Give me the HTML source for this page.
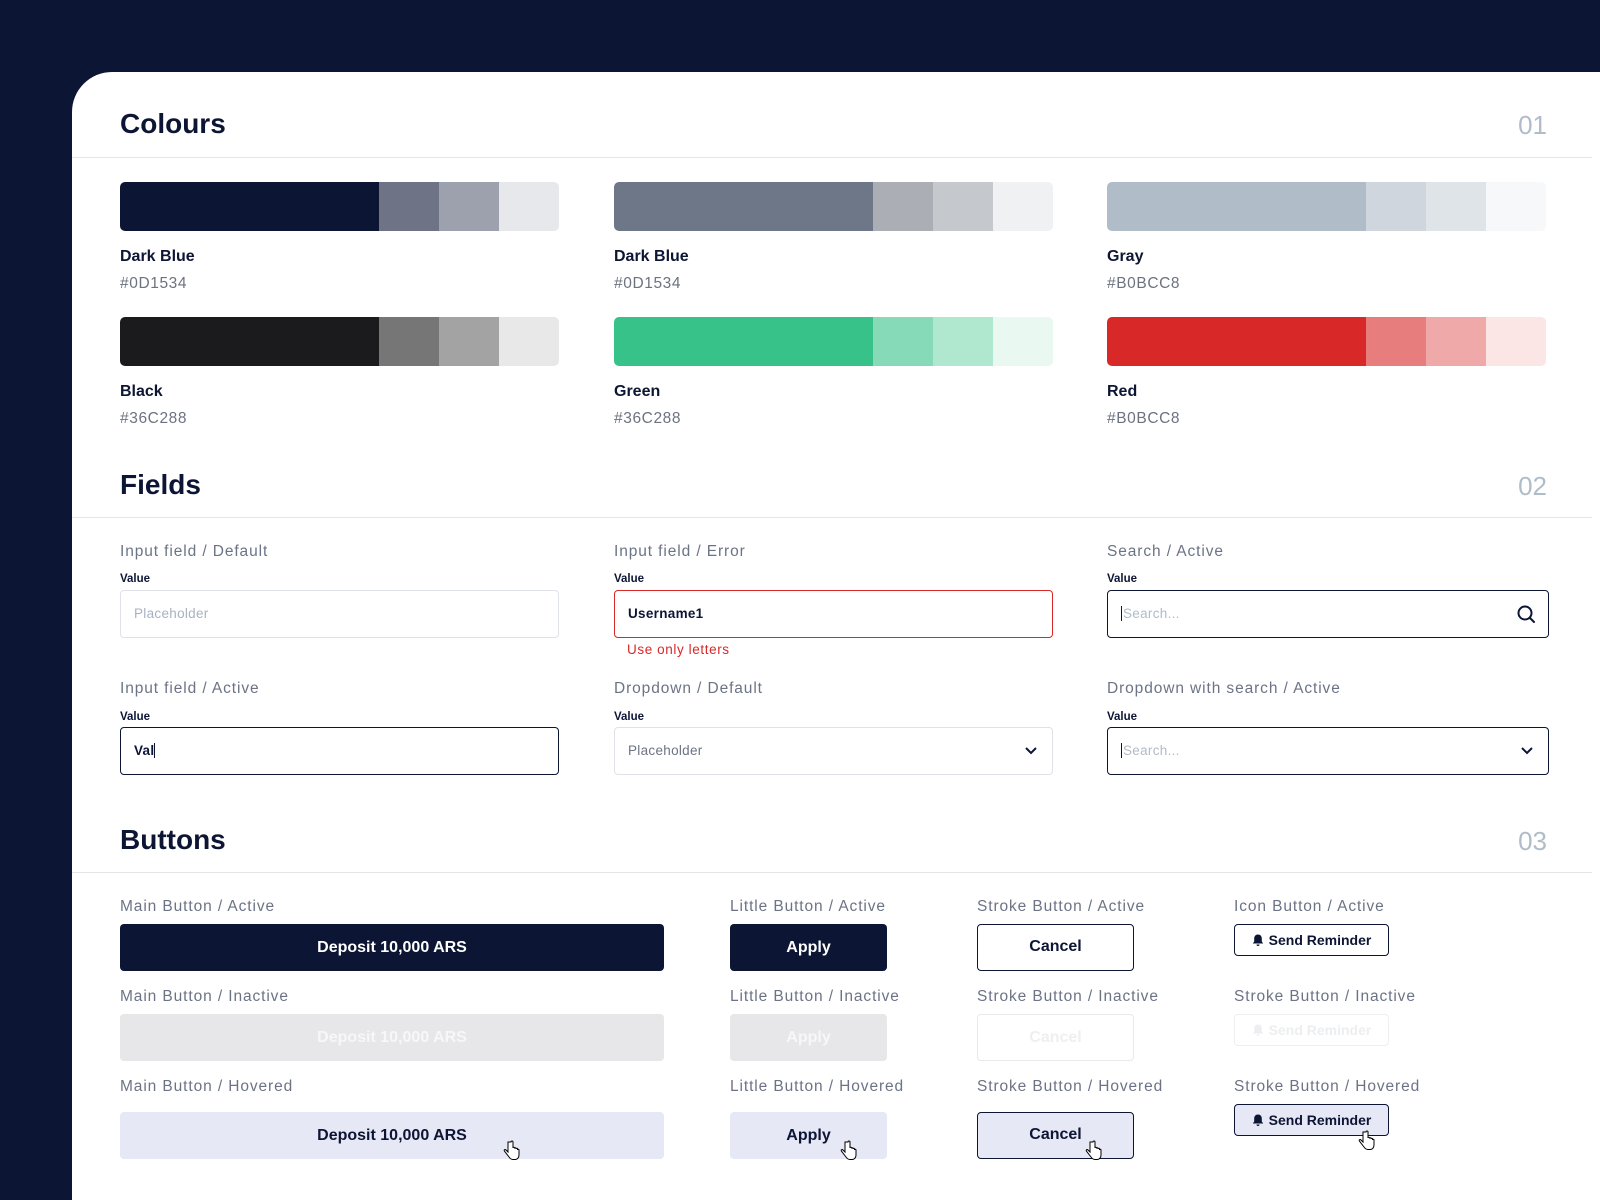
<!DOCTYPE html>
<html><head><meta charset="utf-8"><style>
*{margin:0;padding:0;box-sizing:border-box}
html,body{width:1600px;height:1200px;overflow:hidden}
body{background:#0d1534;font-family:"Liberation Sans",sans-serif;position:relative}
.card{position:absolute;left:72px;top:72px;width:1528px;height:1128px;background:#fff;border-top-left-radius:40px}
.a{position:absolute}
.h{font-size:28px;font-weight:bold;color:#0d1534;line-height:32px}
.num{font-size:26px;color:#b0bcc8;line-height:32px;text-align:right;width:100px}
.hr{height:1px;background:#e2e4e8;left:72px;width:1520px}
.bar{height:49px;width:439px;border-radius:5px;overflow:hidden;display:flex}
.bar div{height:100%}
.cn{font-size:16px;font-weight:bold;color:#0d1534;line-height:20px}
.hex{font-size:15.5px;color:#6b7280;line-height:20px;letter-spacing:.6px}
.lb{font-size:15.5px;color:#6b7385;line-height:20px;letter-spacing:.9px}
.v{font-size:11.5px;font-weight:bold;color:#0d1534;line-height:14px}
.in{height:48px;border:1px solid #dfe2e7;border-radius:4px;font-size:13.5px;line-height:46px;padding-left:13px;color:#a9b2c3;letter-spacing:.3px}
.btn{border-radius:4px;font-size:16px;font-weight:bold;text-align:center;height:47px;line-height:47px}
.ib{border-radius:4px;font-size:14px;font-weight:bold;text-align:center;height:32px;line-height:30px;width:155px;border:1px solid #0d1534;color:#0d1534}
svg.bell{vertical-align:-2px;margin-right:5px}
</style></head><body>
<div class="card"></div>

<div class="a h" style="left:120px;top:108px">Colours</div>
<div class="a num" style="left:1447px;top:109px">01</div>
<div class="a hr" style="top:157px"></div>

<div class="a bar" style="left:120px;top:182px"><div style="width:259px;background:#0d1534"></div><div style="width:60px;background:#6e7386"></div><div style="width:60px;background:#9da1ad"></div><div style="flex:1;background:#e7e8eb"></div></div>
<div class="a bar" style="left:614px;top:182px"><div style="width:259px;background:#6e7787"></div><div style="width:60px;background:#abaeb5"></div><div style="width:60px;background:#c5c8cd"></div><div style="flex:1;background:#f0f1f3"></div></div>
<div class="a bar" style="left:1107px;top:182px"><div style="width:259px;background:#b0bcc8"></div><div style="width:60px;background:#cfd6dd"></div><div style="width:60px;background:#dfe4e8"></div><div style="flex:1;background:#f6f8f9"></div></div>
<div class="a cn" style="left:120px;top:247px">Dark Blue</div><div class="a hex" style="left:120px;top:274px">#0D1534</div>
<div class="a cn" style="left:614px;top:247px">Dark Blue</div><div class="a hex" style="left:614px;top:274px">#0D1534</div>
<div class="a cn" style="left:1107px;top:247px">Gray</div><div class="a hex" style="left:1107px;top:274px">#B0BCC8</div>

<div class="a bar" style="left:120px;top:317px"><div style="width:259px;background:#1b1b1d"></div><div style="width:60px;background:#767676"></div><div style="width:60px;background:#a3a3a4"></div><div style="flex:1;background:#e8e8e8"></div></div>
<div class="a bar" style="left:614px;top:317px"><div style="width:259px;background:#36c288"></div><div style="width:60px;background:#86dab7"></div><div style="width:60px;background:#b0e8cf"></div><div style="flex:1;background:#eaf8f2"></div></div>
<div class="a bar" style="left:1107px;top:317px"><div style="width:259px;background:#d92828"></div><div style="width:60px;background:#e87d7d"></div><div style="width:60px;background:#f0a9a9"></div><div style="flex:1;background:#fbe5e5"></div></div>
<div class="a cn" style="left:120px;top:382px">Black</div><div class="a hex" style="left:120px;top:409px">#36C288</div>
<div class="a cn" style="left:614px;top:382px">Green</div><div class="a hex" style="left:614px;top:409px">#36C288</div>
<div class="a cn" style="left:1107px;top:382px">Red</div><div class="a hex" style="left:1107px;top:409px">#B0BCC8</div>

<div class="a h" style="left:120px;top:469px">Fields</div>
<div class="a num" style="left:1447px;top:470px">02</div>
<div class="a hr" style="top:517px"></div>

<div class="a lb" style="left:120px;top:542px">Input field / Default</div>
<div class="a v" style="left:120px;top:572px">Value</div>
<div class="a in" style="left:120px;top:590px;width:439px">Placeholder</div>

<div class="a lb" style="left:614px;top:542px">Input field / Error</div>
<div class="a v" style="left:614px;top:572px">Value</div>
<div class="a in" style="left:614px;top:590px;width:439px;border-color:#d92828;color:#0d1534;font-weight:bold">Username1</div>
<div class="a" style="left:627px;top:642px;font-size:13.5px;color:#d92828;letter-spacing:.6px">Use only letters</div>

<div class="a lb" style="left:1107px;top:542px">Search / Active</div>
<div class="a v" style="left:1107px;top:572px">Value</div>
<div class="a in" style="left:1107px;top:590px;width:442px;border-color:#0d1534;color:#b0bcc8"><span style="border-left:1px solid #0d1534;padding-left:1px">Search...</span>
<svg class="a" style="right:12px;top:13px" width="20" height="20" viewBox="0 0 20 20"><circle cx="9" cy="9" r="6.5" fill="none" stroke="#0d1534" stroke-width="2"/><path d="M14 14l4 4" stroke="#0d1534" stroke-width="2" stroke-linecap="round"/></svg></div>

<div class="a lb" style="left:120px;top:679px">Input field / Active</div>
<div class="a v" style="left:120px;top:710px">Value</div>
<div class="a in" style="left:120px;top:727px;width:439px;border-color:#0d1534;color:#0d1534;font-weight:bold">Val<span style="border-left:1px solid #0d1534"></span></div>

<div class="a lb" style="left:614px;top:679px">Dropdown / Default</div>
<div class="a v" style="left:614px;top:710px">Value</div>
<div class="a in" style="left:614px;top:727px;width:439px;color:#6b7385">Placeholder
<svg class="a" style="right:14px;top:18px" width="14" height="10" viewBox="0 0 14 10"><path d="M2 2l5 5 5-5" fill="none" stroke="#0d1534" stroke-width="2"/></svg></div>

<div class="a lb" style="left:1107px;top:679px">Dropdown with search / Active</div>
<div class="a v" style="left:1107px;top:710px">Value</div>
<div class="a in" style="left:1107px;top:727px;width:442px;border-color:#0d1534;color:#b0bcc8"><span style="border-left:1px solid #0d1534;padding-left:1px">Search...</span>
<svg class="a" style="right:14px;top:18px" width="14" height="10" viewBox="0 0 14 10"><path d="M2 2l5 5 5-5" fill="none" stroke="#0d1534" stroke-width="2"/></svg></div>

<div class="a h" style="left:120px;top:824px">Buttons</div>
<div class="a num" style="left:1447px;top:825px">03</div>
<div class="a hr" style="top:872px"></div>

<div class="a lb" style="left:120px;top:897px">Main Button / Active</div>
<div class="a btn" style="left:120px;top:924px;width:544px;background:#0d1534;color:#fff">Deposit 10,000 ARS</div>
<div class="a lb" style="left:120px;top:987px">Main Button / Inactive</div>
<div class="a btn" style="left:120px;top:1014px;width:544px;background:#e7e7e9;color:#f7f7f8">Deposit 10,000 ARS</div>
<div class="a lb" style="left:120px;top:1077px">Main Button / Hovered</div>
<div class="a btn" style="left:120px;top:1112px;width:544px;background:#e6e8f5;color:#0d1534">Deposit 10,000 ARS</div>

<div class="a lb" style="left:730px;top:897px">Little Button / Active</div>
<div class="a btn" style="left:730px;top:924px;width:157px;background:#0d1534;color:#fff">Apply</div>
<div class="a lb" style="left:730px;top:987px">Little Button / Inactive</div>
<div class="a btn" style="left:730px;top:1014px;width:157px;background:#e7e7e9;color:#f7f7f8">Apply</div>
<div class="a lb" style="left:730px;top:1077px">Little Button / Hovered</div>
<div class="a btn" style="left:730px;top:1112px;width:157px;background:#e6e8f5;color:#0d1534">Apply</div>

<div class="a lb" style="left:977px;top:897px">Stroke Button / Active</div>
<div class="a btn" style="left:977px;top:924px;width:157px;border:1.5px solid #0d1534;line-height:44px;color:#0d1534">Cancel</div>
<div class="a lb" style="left:977px;top:987px">Stroke Button / Inactive</div>
<div class="a btn" style="left:977px;top:1014px;width:157px;border:1px solid #e8e9ec;line-height:45px;color:#eeeff1">Cancel</div>
<div class="a lb" style="left:977px;top:1077px">Stroke Button / Hovered</div>
<div class="a btn" style="left:977px;top:1112px;width:157px;border:1.5px solid #0d1534;line-height:44px;background:#e6e8f5;color:#0d1534">Cancel</div>

<div class="a lb" style="left:1234px;top:897px">Icon Button / Active</div>
<div class="a ib" style="left:1234px;top:924px"><svg class="bell" width="12" height="13" viewBox="0 0 12 13"><path d="M6 0.5c-2.3 0-3.8 1.7-3.8 4v3L0.8 9.5h10.4L9.8 7.5v-3c0-2.3-1.5-4-3.8-4zM4.5 10.5a1.5 1.5 0 003 0z" fill="#0d1534"/></svg>Send Reminder</div>
<div class="a lb" style="left:1234px;top:987px">Stroke Button / Inactive</div>
<div class="a ib" style="left:1234px;top:1014px;border-color:#eceef0;color:#eceef0"><svg class="bell" width="12" height="13" viewBox="0 0 12 13"><path d="M6 0.5c-2.3 0-3.8 1.7-3.8 4v3L0.8 9.5h10.4L9.8 7.5v-3c0-2.3-1.5-4-3.8-4zM4.5 10.5a1.5 1.5 0 003 0z" fill="#eceef0"/></svg>Send Reminder</div>
<div class="a lb" style="left:1234px;top:1077px">Stroke Button / Hovered</div>
<div class="a ib" style="left:1234px;top:1104px;background:#e6e8f5"><svg class="bell" width="12" height="13" viewBox="0 0 12 13"><path d="M6 0.5c-2.3 0-3.8 1.7-3.8 4v3L0.8 9.5h10.4L9.8 7.5v-3c0-2.3-1.5-4-3.8-4zM4.5 10.5a1.5 1.5 0 003 0z" fill="#0d1534"/></svg>Send Reminder</div>

<svg class="a" style="left:503px;top:1140px" width="18" height="22" viewBox="0 0 18 22"><path d="M5 2v10l-2-2c-1-1-2.5 0-1.5 1.2L6 17c1 1.5 2 2.5 4 2.5h2c2.5 0 4-2 4-4.5V10c0-1-1.5-1-1.5 0V9c0-1-1.5-1-1.5 0V8.5c0-1-1.5-1-1.5 0V8c0-1-1.5-1-1.5 0V2c0-1.3-2-1.3-2 0z" fill="#fff" stroke="#000" stroke-width="1"/></svg>
<svg class="a" style="left:840px;top:1140px" width="18" height="22" viewBox="0 0 18 22"><path d="M5 2v10l-2-2c-1-1-2.5 0-1.5 1.2L6 17c1 1.5 2 2.5 4 2.5h2c2.5 0 4-2 4-4.5V10c0-1-1.5-1-1.5 0V9c0-1-1.5-1-1.5 0V8.5c0-1-1.5-1-1.5 0V8c0-1-1.5-1-1.5 0V2c0-1.3-2-1.3-2 0z" fill="#fff" stroke="#000" stroke-width="1"/></svg>
<svg class="a" style="left:1085px;top:1140px" width="18" height="22" viewBox="0 0 18 22"><path d="M5 2v10l-2-2c-1-1-2.5 0-1.5 1.2L6 17c1 1.5 2 2.5 4 2.5h2c2.5 0 4-2 4-4.5V10c0-1-1.5-1-1.5 0V9c0-1-1.5-1-1.5 0V8.5c0-1-1.5-1-1.5 0V8c0-1-1.5-1-1.5 0V2c0-1.3-2-1.3-2 0z" fill="#fff" stroke="#000" stroke-width="1"/></svg>
<svg class="a" style="left:1358px;top:1130px" width="18" height="22" viewBox="0 0 18 22"><path d="M5 2v10l-2-2c-1-1-2.5 0-1.5 1.2L6 17c1 1.5 2 2.5 4 2.5h2c2.5 0 4-2 4-4.5V10c0-1-1.5-1-1.5 0V9c0-1-1.5-1-1.5 0V8.5c0-1-1.5-1-1.5 0V8c0-1-1.5-1-1.5 0V2c0-1.3-2-1.3-2 0z" fill="#fff" stroke="#000" stroke-width="1"/></svg>
</body></html>
